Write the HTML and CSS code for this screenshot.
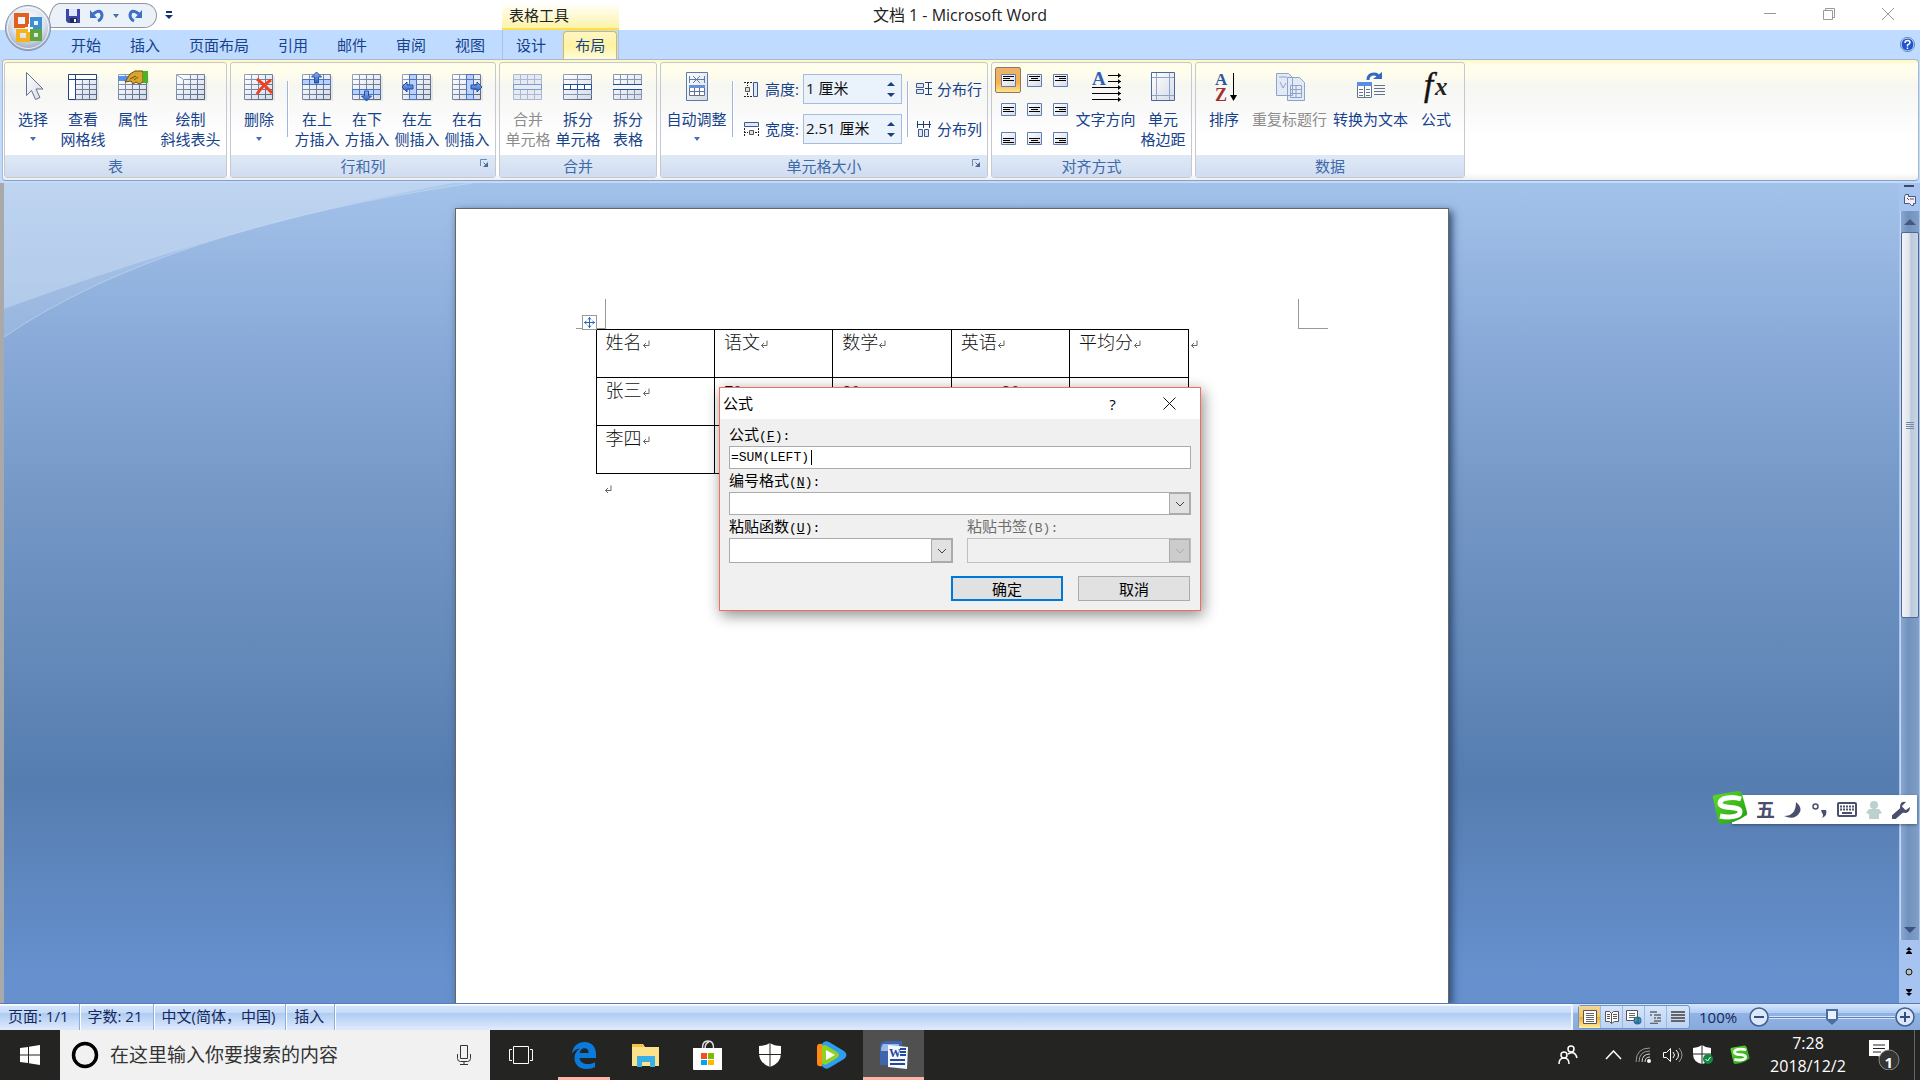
FILE: index.html
```html
<!DOCTYPE html>
<html lang="zh-CN">
<head>
    <meta charset="UTF-8">
    <meta name="viewport" content="width=device-width, initial-scale=1.0">
    <title>文档 1 - Microsoft Word</title>
    <link rel="stylesheet" href="styles.css">
</head>
<body>
    <!-- shared icon parts -->
    <svg class="defs" aria-hidden="true">
        <defs>
            <linearGradient id="cell" x1="0" y1="0" x2="1" y2="1">
                <stop offset="0" stop-color="#fff"/><stop offset="1" stop-color="#d5dae6"/>
            </linearGradient>
            <linearGradient id="edge" gradientUnits="userSpaceOnUse" x1="1" y1="3" x2="30" y2="29">
                <stop offset="0" stop-color="#93a3c0"/><stop offset="1" stop-color="#4f6282"/>
            </linearGradient>
            <linearGradient id="arrow" x1="0" y1="0" x2="0" y2="1">
                <stop offset="0" stop-color="#8fb4f2"/><stop offset="1" stop-color="#2a5cc0"/>
            </linearGradient>
            <radialGradient id="orb" cx="50%" cy="35%" r="65%">
                <stop offset="0" stop-color="#fff"/><stop offset="55%" stop-color="#dfe5ee"/><stop offset="100%" stop-color="#96a5bd"/>
            </radialGradient>
            <linearGradient id="green" x1="0" y1="0" x2="1" y2="1">
                <stop offset="0" stop-color="#5fdc28"/><stop offset="1" stop-color="#1c9d10"/>
            </linearGradient>
            <symbol id="grid" viewBox="0 0 32 32">
                <path d="M3 5h29v25H3z" fill="#0001"/>
                <path d="M1.500 3.500h28v25h-28z" fill="url(#cell)" stroke="url(#edge)"/>
                <path d="M1.500 8.500h28m-28 5h28m-28 5h28m-28 5h28M8.500 3.500v25m7-25v25m7-25v25" stroke="url(#edge)" fill="none"/>
            </symbol>
            <symbol id="ret" viewBox="0 0 8 9">
                <path d="M7 .5v5H1.500M4 3L1.500 5.500 4 8" fill="none" stroke="#666"/>
            </symbol>
            <symbol id="launch" viewBox="0 0 9 9">
                <path d="M.5 7V.5H7" fill="none" stroke="#6a87b3"/><path d="M3.500 3.500l3 3" stroke="#4a6b9f"/><path d="M8 3v5H3z" fill="#4a6b9f"/>
            </symbol>
            <symbol id="sogou" viewBox="0 0 36 34">
                <path d="M1 7Q0 5 3 4L26 0q3 0 4 3l5 18q1 3-2 4Q24 32 9 33q-2 0-3-3z" fill="url(#green)"/>
                <path d="M29 8C20 5 8 7 8 12c0 7 21 2 20 9 0 5-12 6-20 4" fill="none" stroke="#fff" stroke-width="5"/>
            </symbol>
            <symbol id="chev" viewBox="0 0 10 6"><path d="M1 1l4 4 4-4" fill="none" stroke="currentColor"/></symbol>
            <symbol id="drop" viewBox="0 0 6 4"><path d="M0 0h6L3 4z" fill="#4a6fb0"/></symbol>
        </defs>
    </svg>

    <header class="titlebar">
        <div class="titlebar-left">
            <div class="quick">
                <button aria-label="保存"><svg width="16" height="16" viewBox="0 0 16 16"><path d="M1 1h14v14H3l-2-2z" fill="#3c46a8"/><path d="M4 1h8v7H4z" fill="#dfe6ff"/><path d="M5 10h7v5H5z" fill="#222a55"/><path d="M9 11h2v3H9z" fill="#fff"/></svg></button>
                <button aria-label="撤消"><svg width="16" height="16" viewBox="0 0 16 16"><path d="M4 6Q12 0 13 7q0 4-4 6" fill="none" stroke="#3c70c4" stroke-width="3"/><path d="M1 2v8h7z" fill="#3c70c4"/></svg></button>
                <svg width="6" height="4"><use href="#drop"/></svg>
                <button aria-label="重复"><svg width="16" height="16" viewBox="0 0 16 16"><path d="M12 6Q4 0 3 7q0 4 4 6" fill="none" stroke="#3c70c4" stroke-width="3"/><path d="M15 2v8H8z" fill="#3c70c4"/></svg></button>
            </div>
            <button class="quick-more" aria-label="自定义快速访问工具栏"><svg width="8" height="9" viewBox="0 0 8 9"><path d="M1 0h6v2H1zM0 4h8L4 8z" fill="#15336e"/></svg></button>
            <div class="context-title">表格工具</div>
        </div>
        <h1>文档 1 - Microsoft Word</h1>
        <div class="window-buttons">
            <button aria-label="最小化"><svg width="12" height="12"><path d="M0 5.500h12" stroke="#999"/></svg></button>
            <button aria-label="还原"><svg width="12" height="12"><path d="M.5 2.500h9v9h-9zM2.500 2.500v-2h9v9h-2" fill="none" stroke="#999"/></svg></button>
            <button aria-label="关闭"><svg width="12" height="12"><path d="M0 0l12 12M12 0L0 12" stroke="#999"/></svg></button>
        </div>
        <button class="orb" aria-label="Office 按钮">
            <svg width="48" height="48" viewBox="0 0 48 48">
                <circle cx="24" cy="24" r="22.500" fill="url(#orb)" stroke="#8192ad"/>
                <circle cx="24" cy="24" r="20.500" fill="none" stroke="#fff" stroke-opacity=".8"/>
                <g fill="none" stroke-width="4">
                    <path d="M12 11h11v11H12z" stroke="#e2601f"/><path d="M28 15h8v8h-8z" stroke="#3b8fd6"/>
                    <path d="M14 27h10v9H14z" stroke="#f4b21c"/><path d="M28 27h8v8h-8z" stroke="#5fa53c"/>
                </g>
                <path d="M21 24h8M25 20v8" stroke="#fff" stroke-width="2"/>
            </svg>
        </button>
    </header>

    <nav class="tabs">
        <a href="#">开始</a><a href="#">插入</a><a href="#">页面布局</a><a href="#">引用</a><a href="#">邮件</a><a href="#">审阅</a><a href="#">视图</a>
        <div class="context-tabs"><a href="#">设计</a><a href="#" class="active">布局</a></div>
        <button class="help" aria-label="帮助"><svg width="15" height="15" viewBox="0 0 15 15"><circle cx="7.500" cy="7.500" r="6.500" fill="#1f55d0" stroke="#fff"/><circle cx="7.500" cy="7.500" r="7" fill="none" stroke="#4d7ab5"/><path d="M5 6q0-2.500 2.500-2.500T10 5.500Q10 7 7.500 8v1.500M7.500 10.500v1.500" stroke="#fff" stroke-width="1.500" fill="none"/></svg></button>
    </nav>

    <section class="ribbon">
        <div class="group">
            <div class="group-body">
                <button class="big"><svg width="32" height="32" viewBox="0 0 32 32"><path d="M9.500 1.500v23l5-5 4 9 4.500-2-4-8.500h7z" fill="url(#cell)" stroke="#65738c"/></svg>选择<svg class="caret" width="6" height="4"><use href="#drop"/></svg></button>
                <button class="big"><svg width="32" height="32" viewBox="0 0 32 32"><use href="#grid"/><path d="M1.500 3.500h28v5h-28zM1.500 8.500h7v20h-7z" fill="#fff" stroke="#24437c"/><path d="M8.500 3v25" stroke="#24437c"/></svg>查看<br>网格线</button>
                <button class="big"><svg width="32" height="32" viewBox="0 0 32 32"><use href="#grid"/><path d="M1 5h10v5H1z" fill="#5b90e8"/><path d="M8 11l5-8 5-3h8v11l-4 2-3-2-3 2-2-3z" fill="#d8a62e" stroke="#6c4d10"/><path d="M13 8l6-3M17 9l4-3" stroke="#6c4d10"/><path d="M26 0h5v12h-5z" fill="#46b32b"/></svg>属性</button>
                <button class="big wide"><svg width="32" height="32" viewBox="0 0 32 32"><use href="#grid"/><path d="M2 4h7v5H2z" fill="#fff"/><path d="M2 4l7 5" stroke="#8d99b5"/></svg>绘制<br>斜线表头</button>
            </div>
            <h2>表</h2>
        </div>
        <div class="group">
            <div class="group-body">
                <button class="big"><svg width="32" height="32" viewBox="0 0 32 32"><use href="#grid"/><path d="M14 8q8 6 15 14M28 9q-9 6-14 14" fill="none" stroke="#f0401e" stroke-width="3"/></svg>删除<svg class="caret" width="6" height="4"><use href="#drop"/></svg></button>
                <span class="sep"></span>
                <button class="big"><svg width="32" height="32" viewBox="0 0 32 32"><use href="#grid"/><path d="M1.500 8.500h28v5h-28z" fill="#b9d0fa" stroke="#4a72bf"/><path d="M8.500 8v6m14-6v6" stroke="#4a72bf"/><path d="M15.500 1l5 5h-3v6h-4V6h-3z" fill="url(#arrow)" stroke="#2450a4"/></svg>在上<br>方插入</button>
                <button class="big"><svg width="32" height="32" viewBox="0 0 32 32"><use href="#grid"/><path d="M1.500 18.500h28v5h-28z" fill="#b9d0fa" stroke="#4a72bf"/><path d="M8.500 18v6m14-6v6" stroke="#4a72bf"/><path d="M15.500 30l5-5h-3v-5h-4v5h-3z" fill="url(#arrow)" stroke="#2450a4"/></svg>在下<br>方插入</button>
                <button class="big"><svg width="32" height="32" viewBox="0 0 32 32"><use href="#grid"/><path d="M8.500 3.500h7v25h-7z" fill="#b9d0fa" stroke="#4a72bf"/><path d="M8 8.500h8m-8 15h8" stroke="#4a72bf"/><path d="M1 16l5-5v3h6v4H6v3z" fill="url(#arrow)" stroke="#2450a4"/></svg>在左<br>侧插入</button>
                <button class="big"><svg width="32" height="32" viewBox="0 0 32 32"><use href="#grid"/><path d="M15.500 3.500h7v25h-7z" fill="#b9d0fa" stroke="#4a72bf"/><path d="M15 8.500h8m-8 15h8" stroke="#4a72bf"/><path d="M31 16l-5-5v3h-6v4h6v3z" fill="url(#arrow)" stroke="#2450a4"/></svg>在右<br>侧插入</button>
            </div>
            <h2>行和列<button class="launcher" aria-label="行和列选项"><svg width="9" height="9"><use href="#launch"/></svg></button></h2>
        </div>
        <div class="group">
            <div class="group-body">
                <button class="big" disabled><svg width="32" height="32" viewBox="0 0 32 32"><g fill="#e6eaf3" stroke="#aab8d2"><path d="M1.500 3.500h28v10h-28zM1.500 13.500h28v5h-28zM1.500 18.500h28v10h-28z"/><path d="M1 8.500h29m-29 15h29M8.500 4v9m7-9v9m7-9v9m-14 6v9m7-9v9m7-9v9"/><path d="M1.500 13.500h28v5h-28z" stroke="#7f9bcd"/></g></svg>合并<br>单元格</button>
                <button class="big"><svg width="32" height="32" viewBox="0 0 32 32"><path d="M1.500 3.500h28v25h-28z" fill="url(#cell)" stroke="url(#edge)"/><path d="M1 8.500h29m-29 15h29M15.500 4v24" stroke="#8494b2"/><path d="M1.500 13.500h28v5h-28zM8.500 13v5m7-5v5m7-5v5" fill="#fff" stroke="#1f4da3"/></svg>拆分<br>单元格</button>
                <button class="big"><svg width="32" height="32" viewBox="0 0 32 32"><path d="M1.500 3.500h28v10h-28zM1.500 18.500h28v10h-28z" fill="url(#cell)" stroke="#8494b2"/><path d="M1 8.500h29m-29 15h29M8.500 4v9m7-9v9m7-9v9m-14 6v9m7-9v9m7-9v9" stroke="#8494b2"/><path d="M1 13.500h29m-29 5h29" stroke="#1f4da3"/></svg>拆分<br>表格</button>
            </div>
            <h2>合并</h2>
        </div>
        <div class="group">
            <div class="group-body">
                <button class="big wide"><svg width="32" height="32" viewBox="0 0 32 32"><path d="M5.500 1.500h21v28h-21z" fill="url(#cell)" stroke="#5d7ba8"/><path d="M8.500 5v7m15-7v7M9 8.500h14M12 5l7 7m0-7l-7 7" stroke="#5d7ba8"/><path d="M8.500 14.500h15v10h-15z" fill="#fff" stroke="#63728e"/><path d="M8 14h16v3H8z" fill="#6590dc"/><path d="M9 20.500h14M13.500 17v8m5-8v8" stroke="#63728e"/></svg>自动调整<svg class="caret" width="6" height="4"><use href="#drop"/></svg></button>
                <span class="sep"></span>
                <div class="size-fields">
                    <label for="row-height"><svg width="16" height="16" viewBox="0 0 16 16"><path d="M10.500 1.500h4v14h-4z" fill="#dfe8f8" stroke="#41598a"/><path d="M1 1.500h8M1 15.500h8M4.500 1v4m0 7v4" stroke="#222" stroke-dasharray="2 1"/><path d="M2.500 6.500h4v4h-4z" fill="#ddd" stroke="#555"/></svg>高度:</label>
                    <div class="spin"><input id="row-height" type="text" value="1 厘米"><button aria-label="调整高度"><svg width="8" height="15" viewBox="0 0 8 15"><path d="M4 0l4 4H0zM4 15l4-4H0z" fill="#1c3f7c"/></svg></button></div>
                    <label for="col-width"><svg width="16" height="16" viewBox="0 0 16 16"><path d="M1.500 1.500h14v4h-14z" fill="#dfe8f8" stroke="#41598a"/><path d="M1.500 7v8M15.500 7v8M1 11.500h4m7 0h4" stroke="#222" stroke-dasharray="2 1"/><path d="M6.500 9.500h4v4h-4z" fill="#ddd" stroke="#555"/></svg>宽度:</label>
                    <div class="spin"><input id="col-width" type="text" value="2.51 厘米"><button aria-label="调整宽度"><svg width="8" height="15" viewBox="0 0 8 15"><path d="M4 0l4 4H0zM4 15l4-4H0z" fill="#1c3f7c"/></svg></button></div>
                </div>
                <span class="sep"></span>
                <div class="distribute">
                    <button><svg width="16" height="16" viewBox="0 0 16 16"><path d="M.5 2.500h7v4h-7zM.5 8.500h7v4h-7z" fill="#dfe8f8" stroke="#41598a"/><path d="M9 1.500h7M9 7.500h7M9 13.500h7M12.500 1v13" stroke="#1c3f7c"/></svg>分布行</button>
                    <button><svg width="16" height="16" viewBox="0 0 16 16"><path d="M2.500 8.500h4v7h-4zM8.500 8.500h4v7h-4z" fill="#dfe8f8" stroke="#41598a"/><path d="M1.500 0v7M7.500 0v7M13.500 0v7M1 3.500h14" stroke="#1c3f7c"/></svg>分布列</button>
                </div>
            </div>
            <h2>单元格大小<button class="launcher" aria-label="单元格大小选项"><svg width="9" height="9"><use href="#launch"/></svg></button></h2>
        </div>
        <div class="group">
            <div class="group-body">
                <div class="align-grid" id="align-grid"></div>
                <button class="big wide"><svg width="32" height="32" viewBox="0 0 32 32"><text x="2" y="14" font-family="Liberation Serif" font-weight="bold" font-size="19" fill="#2f62b8">A</text><path d="M18 4.500h13m-13 6h13M2 16.500h29m-29 6h29m-29 6h29" stroke="#000"/><path d="M28 2l3 2.500-3 2.500zm0 6l3 2.500-3 2.500zm0 6l3 2.500-3 2.500zm0 6l3 2.500-3 2.500zm0 6l3 2.500-3 2.500z"/></svg>文字方向</button>
                <button class="big"><svg width="32" height="32" viewBox="0 0 32 32"><path d="M4.500 1.500h23v28h-23z" fill="url(#cell)" stroke="#4b689c"/><path d="M9.500 2v27m13-27v27M5 6.500h22M5 24.500h22" stroke="#8fa4c8"/></svg>单元<br>格边距</button>
            </div>
            <h2>对齐方式</h2>
        </div>
        <div class="group">
            <div class="group-body">
                <button class="big"><svg width="32" height="32" viewBox="0 0 32 32"><text x="7" y="14" font-family="Liberation Serif" font-weight="bold" font-size="17" fill="#31569f">A</text><text x="7" y="30" font-family="Liberation Serif" font-weight="bold" font-size="18" fill="#a33030">Z</text><path d="M25.500 2v24" stroke="#000"/><path d="M22 24h7l-3.500 6z"/></svg>排序</button>
                <button class="big extra" disabled><svg width="32" height="32" viewBox="0 0 32 32"><path d="M2.500 2.500h12l4 4v18h-16zM13.500 6.500h12l5 5v18h-17z" fill="#e3eaf5" stroke="#8ca4c9"/><path d="M5 6h8M6 11l3 6 3-5M16.500 14.500h11v12h-11zM16 18.500h12m-12 4h12m-6-8v12" fill="none" stroke="#8ca4c9"/></svg>重复标题行</button>
                <button class="big extra"><svg width="32" height="32" viewBox="0 0 32 32"><path d="M2.500 11.500h14v15h-14z" fill="#fff" stroke="#63728e"/><path d="M2 11h15v4H2z" fill="#5b8ce6"/><path d="M4 18.500h4m-4 3h4m-4 3h4m3-6h4m-4 3h4m-4 3h4M9.500 15v11M19 14.500h11m-11 3h11m-11 3h11m-11 3h11" stroke="#63728e"/><path d="M13 9q0-6 6-6 4 0 5 4" fill="none" stroke="#3769c2" stroke-width="3"/><path d="M18 8h9V1z" fill="#3769c2"/></svg>转换为文本</button>
                <button class="big"><svg width="32" height="32" viewBox="0 0 32 32"><text x="4" y="25" font-family="Liberation Serif" font-style="italic" font-size="33" fill="#111" stroke="#111" stroke-width=".5">f</text><text x="15" y="24" font-family="Liberation Serif" font-style="italic" font-weight="bold" font-size="25" fill="#222">x</text></svg>公式</button>
            </div>
            <h2>数据</h2>
        </div>
    </section>

    <main class="workspace">
        <svg class="swoosh" width="480" height="160" viewBox="0 0 480 160" aria-hidden="true">
            <path d="M0 0H469Q160 45 0 154z" fill="#fff" fill-opacity=".12"/>
            <path d="M0 0H449Q240 38 0 126z" fill="#dbe8fa" fill-opacity=".36"/>
            <path d="M469 0Q160 45 0 154" fill="none" stroke="#c4daf4" stroke-opacity=".6"/>
        </svg>
        <div class="desk">
            <article class="page">
                <span class="corner corner-left"></span>
                <span class="corner corner-right"></span>
                <span class="table-handle"><svg width="11" height="11" viewBox="0 0 11 11"><path d="M5.500 0v11M0 5.500h11M4 2.500l1.500-2 1.500 2m-3 6l1.500 2 1.500-2M2.500 4l-2 1.500 2 1.500m6-3l2 1.500-2 1.500" fill="none" stroke="#2f66c0"/></svg></span>
                <div class="table-row">
                    <table>
                        <tr><td>姓名<svg><use href="#ret"/></svg></td><td>语文<svg><use href="#ret"/></svg></td><td>数学<svg><use href="#ret"/></svg></td><td>英语<svg><use href="#ret"/></svg></td><td>平均分<svg><use href="#ret"/></svg></td></tr>
                        <tr><td>张三<svg><use href="#ret"/></svg></td><td class="num">70</td><td class="num">80</td><td class="num indent">90</td><td></td></tr>
                        <tr><td>李四<svg><use href="#ret"/></svg></td><td></td><td></td><td></td><td></td></tr>
                    </table>
                    <svg><use href="#ret"/></svg>
                </div>
                <p><svg><use href="#ret"/></svg></p>
            </article>
        </div>
        <div class="scroll">
            <span class="split"></span>
            <button aria-label="标尺"><svg width="13" height="13" viewBox="0 0 13 13"><path d="M1.500 3.500v7h5l2 2h2v-2h2v-7h-7v-2h-3z" fill="#f4eef2" stroke="#455a80"/><path d="M4 5l2 2m2-2v2m2-2v2" stroke="#455a80"/></svg></button>
            <div class="track">
                <button aria-label="向上"><svg width="12" height="6"><path d="M6 0l6 6H0z" fill="#47587f"/></svg></button>
                <div class="thumb"><i></i><i></i><i></i><i></i></div>
                <div class="rest"></div>
                <button aria-label="向下"><svg width="12" height="6"><path d="M0 0h12L6 6z" fill="#3c5282"/></svg></button>
            </div>
            <button class="browse" aria-label="前一页"><svg width="6" height="7"><path d="M3 0l3 3H0zM3 3l3 3H0zM0 6h6v1H0z"/></svg></button>
            <button class="browse" aria-label="选择浏览对象"><svg width="8" height="8"><circle cx="4" cy="4" r="3" fill="#bbb" stroke="#111"/></svg></button>
            <button class="browse" aria-label="下一页"><svg width="6" height="7"><path d="M0 0h6v1H0zM0 1h6L3 4zM0 4h6L3 7z"/></svg></button>
        </div>
    </main>

    <footer class="status">
        <span>页面: 1/1</span><span>字数: 21</span><span>中文(简体，中国)</span><span>插入</span>
        <div class="status-right">
            <div class="views">
                <button class="on" aria-label="页面视图"><svg width="16" height="16" viewBox="0 0 16 16"><path d="M1.500 1.500h13v13h-13z" fill="#fff" stroke="#555"/><path d="M4 4.500h8m-8 2h8m-8 2h8m-8 2h8m-8 2h8" stroke="#666"/></svg></button>
                <button aria-label="阅读版式"><svg width="16" height="16" viewBox="0 0 16 16"><path d="M1.500 2.500h4l2 2 2-2h5v10h-4l-3 2-2-2h-4z" fill="#fff" stroke="#555"/><path d="M7.500 4v10M3 5.500h3m-3 2h3m-3 2h3m3-4h4m-4 2h4m-4 2h4" stroke="#555"/></svg></button>
                <button aria-label="Web 版式"><svg width="16" height="16" viewBox="0 0 16 16"><path d="M.5 1.500h11v10H.5z" fill="#fff" stroke="#555"/><path d="M3 4.500h6m-6 2h6m-6 2h6" stroke="#666"/><circle cx="11.500" cy="11.500" r="4" fill="#2d68b8"/><path d="M9 9l3 1-1 2-2 1zM13 9l2 2-2 3z" fill="#4aa64a"/></svg></button>
                <button aria-label="大纲视图"><svg width="14" height="14" viewBox="0 0 14 14"><path d="M1 2h7M5 5h7M8 8h4M5 11h7M1 13.500h8M1 5h2m2 3h2" stroke="#666" stroke-width="1.500"/></svg></button>
                <button aria-label="普通视图"><svg width="14" height="14" viewBox="0 0 14 14"><path d="M0 2h14M0 5h14M0 8h14M0 11h14" stroke="#666" stroke-width="2"/></svg></button>
            </div>
            <span class="percent">100%</span>
            <button class="zoom-btn" aria-label="缩小"><svg width="20" height="20" viewBox="0 0 20 20"><circle cx="10" cy="10" r="9" fill="#dce8fa" stroke="#3f5f94" stroke-width="1.500"/><path d="M5 10h10" stroke="#35507f" stroke-width="2"/></svg></button>
            <input type="range" min="0" max="100" value="50" aria-label="显示比例">
            <button class="zoom-btn" aria-label="放大"><svg width="20" height="20" viewBox="0 0 20 20"><circle cx="10" cy="10" r="9" fill="#dce8fa" stroke="#3f5f94" stroke-width="1.500"/><path d="M5 10h10M10 5v10" stroke="#35507f" stroke-width="2"/></svg></button>
        </div>
    </footer>

    <div class="taskbar">
        <button class="start" aria-label="开始菜单"><svg width="20" height="20" viewBox="0 0 20 20"><path d="M0 3l8-1v7.500H0zM9 1.800L20 0v9.500H9zM0 10.500h8V18l-8-1zM9 10.500h11V20L9 18.200z" fill="#fff"/></svg></button>
        <div class="search">
            <svg width="28" height="28" viewBox="0 0 28 28"><circle cx="14" cy="14" r="11.500" fill="none" stroke="#000" stroke-width="3.500"/></svg>
            <input type="text" placeholder="在这里输入你要搜索的内容" aria-label="搜索">
            <button aria-label="语音"><svg width="16" height="20" viewBox="0 0 16 20"><path d="M4.500.5h7v13h-7zM1.500 9v4.500q0 3 3 3h7q3 0 3-3V9M8 17v2.500M4 19.500h8" fill="none" stroke="#333"/></svg></button>
        </div>
        <button class="app" aria-label="任务视图"><svg width="24" height="18" viewBox="0 0 24 18"><path d="M4.500.5h15v17h-15zM3 3.500H.5v11H3M21 3.500h2.500v11H21" fill="none" stroke="#fff"/></svg></button>
        <button class="app running" aria-label="Edge"><svg width="26" height="28" viewBox="0 0 26 28"><path d="M1 12.500C2 5 7 1 13.500 1 21 1 25 6.500 25 13v4H8.500c.5 4 4 6 8.500 6 3 0 5-.7 7-1.800V26c-2 1.200-5 2-8.500 2C8 28 3.500 23.500 3.500 17c0-4 2-7.500 5.500-9.500C5.500 8 3 9.500 1 12.500zM8.700 12h9c0-3-1.500-4.700-4.200-4.700S9.300 9 8.700 12z" fill="#0a7bdc" fill-rule="evenodd"/></svg></button>
        <button class="app" aria-label="文件资源管理器"><svg width="28" height="24" viewBox="0 0 28 24"><path d="M0 1h11l2 3h14v19H0z" fill="#fde28c"/><path d="M0 1h10l2 3H0z" fill="#f5c343"/><path d="M5 24V13h18v11h-5v-5h-8v5z" fill="#39b1e6"/></svg></button>
        <button class="app" aria-label="应用商店"><svg width="30" height="30" viewBox="0 0 30 30"><path d="M9.500 9Q9 1 15 1t5.500 8M12 9q0-6 4-7" fill="none" stroke="#ddd" stroke-width="1.500"/><path d="M0 8h29v22H1q-1 0-1-1z" fill="#fff"/><path d="M8 13h6v6H8z" fill="#f25022"/><path d="M15 13h6v6h-6z" fill="#7fba00"/><path d="M8 20h6v5H8z" fill="#00a4ef"/><path d="M15 20h6v5h-6z" fill="#ffb900"/></svg></button>
        <button class="app" aria-label="安全中心"><svg width="22" height="24" viewBox="0 0 22 24"><path d="M11 0q4 3 11 3v7q0 10-11 14Q0 20 0 10V3q7 0 11-3z" fill="#fff"/><path d="M11 0v24M0 11.500h22" stroke="#242422"/></svg></button>
        <button class="app" aria-label="视频"><svg width="30" height="28" viewBox="0 0 30 28"><path d="M0 6q0-4 5-3v22q-5 1-5-3z" fill="#ff8a14"/><path d="M5 3q2-4 7-2l15 9q5 4 0 8l-15 9q-4 2-7-2z" fill="#2f9df0"/><path d="M5 5q2-2 5 0l10 6q4 3 0 6l-10 6q-3 2-5-1z" fill="#8ed321"/><path d="M9 9l9 5-9 5z" fill="#fff"/></svg></button>
        <button class="app running current" aria-label="Word"><svg width="30" height="28" viewBox="0 0 30 28"><path d="M6 0h17v24H1V6q0-5 5-6z" fill="#3d64ad"/><path d="M4 3h16v7H2q0-5 2-7z" fill="#9bb8e6"/><path d="M9 4l20 2-1 22-19-2z" fill="#f4f7fc"/><text x="10" y="16" font-family="Liberation Serif" font-weight="bold" font-size="12" fill="#24489c">W</text><path d="M21 8h6m-6 3h6m-6 3h6M11 19h15m-15 4h15" stroke="#24489c" stroke-width="2"/></svg></button>
        <div class="tray">
            <button class="people" aria-label="人脉"><svg width="20" height="20" viewBox="0 0 20 20"><g fill="none" stroke="#fff" stroke-width="1.500"><circle cx="13" cy="4" r="3"/><circle cx="6" cy="10" r="3"/><path d="M1 19q0-6 5-6t5 6M10 9q7-4 9 4"/></g></svg></button>
            <button aria-label="显示隐藏的图标"><svg width="17" height="10" viewBox="0 0 17 10"><path d="M1 9l7.500-8L16 9" fill="none" stroke="#fff" stroke-width="1.500"/></svg></button>
            <button aria-label="网络"><svg width="16" height="16" viewBox="0 0 16 16"><g fill="none" stroke="#ddd"><path d="M1 15Q1 1 15 1M4 15Q4 4 15 4" stroke="#999"/><path d="M7 15q0-8 8-8M10 15q0-5 5-5"/></g><circle cx="14" cy="14" r="2" fill="#fff"/></svg></button>
            <button aria-label="音量"><svg width="20" height="18" viewBox="0 0 20 18"><g fill="none" stroke="#fff"><path d="M.5 6.500h3l4-4v13l-4-4h-3zM10 6q3 3 0 6M13 4q5 5 0 10"/><path d="M16 2q6 7 0 14" stroke="#999"/></g></svg></button>
            <button aria-label="Defender"><svg width="20" height="20" viewBox="0 0 20 20"><path d="M9 0q4 3 9 3v6q0 8-9 10Q0 17 0 9V3q5 0 9-3z" fill="#fff"/><path d="M9 0v19M0 9h18" stroke="#242422"/><circle cx="15" cy="14" r="5" fill="#13893f"/><path d="M12.500 14l2 2 3-4" fill="none" stroke="#fff"/></svg></button>
            <button class="ime-tray" aria-label="输入法"><svg width="20" height="20"><use href="#sogou"/></svg></button>
            <time>7:28<br>2018/12/2</time>
            <button class="notice" aria-label="通知"><svg width="31" height="30" viewBox="0 0 31 30"><path d="M0 0h20v16h-6v4l-5-4H0z" fill="#fff"/><path d="M4 5h12M4 8.500h12M4 12h8" stroke="#242422"/><circle cx="20" cy="20" r="10" fill="#353534" stroke="#888"/></svg><b>1</b></button>
        </div>
    </div>

    <div class="ime">
        <svg class="ime-logo" width="36" height="34"><use href="#sogou"/></svg>
        <button>五</button>
        <button aria-label="半角"><svg width="18" height="18" viewBox="0 0 18 18"><path d="M12 1q6 5 4 10-5 9-16 4 12 0 12-14z" fill="#4b4f6e"/></svg></button>
        <button aria-label="中文标点"><svg width="16" height="18" viewBox="0 0 16 18"><circle cx="3.500" cy="5.500" r="2.500" fill="none" stroke="#4b4f6e" stroke-width="1.500"/><path d="M9 9h5q2 5-4 8 2-3 0-5z" fill="#4b4f6e"/></svg></button>
        <button aria-label="软键盘"><svg width="20" height="15" viewBox="0 0 20 15"><rect x="1" y="1" width="18" height="13" rx="1" fill="#fff" stroke="#4b4f6e" stroke-width="2"/><path d="M3 4.500h14M3 7.500h14" stroke="#4b4f6e" stroke-width="2" stroke-dasharray="2 1"/><path d="M5 11h10" stroke="#4b4f6e" stroke-width="2"/></svg></button>
        <button aria-label="账户"><svg width="16" height="18" viewBox="0 0 16 18"><circle cx="8" cy="4" r="4" fill="#bcd0cd"/><path d="M3 8h10l3 4-3 1v5H3v-5l-3-1z" fill="#bcd0cd"/></svg></button>
        <button aria-label="工具"><svg width="18" height="18" viewBox="0 0 18 18"><path d="M2 16l8-7" stroke="#4b4f6e" stroke-width="5" stroke-linecap="round"/><path d="M14 1q-6-1-6 5t6 6q4-1 4-6l-4 3-3-1-1-3z" fill="#4b4f6e"/></svg></button>
    </div>

    <form class="dialog" role="dialog" aria-label="公式">
        <div class="dialog-title">
            <h2>公式</h2>
            <button type="button">?</button>
            <button type="button" aria-label="关闭"><svg width="13" height="13"><path d="M.5.5l12 12M12.500.5l-12 12" stroke="#111"/></svg></button>
        </div>
        <div class="dialog-body">
            <label for="formula">公式<span class="key">(<u>F</u>):</span></label>
            <div class="formula"><input id="formula" type="text" value="=SUM(LEFT)"><i class="cursor"></i></div>
            <label for="format">编号格式<span class="key">(<u>N</u>):</span></label>
            <div class="combo"><select id="format"><option></option></select><span><svg width="10" height="6"><use href="#chev"/></svg></span></div>
            <div class="pair">
                <div>
                    <label for="func">粘贴函数<span class="key">(<u>U</u>):</span></label>
                    <div class="combo tall"><select id="func"><option></option></select><span><svg width="10" height="6"><use href="#chev"/></svg></span></div>
                </div>
                <div class="off">
                    <label for="mark">粘贴书签<span class="key">(B):</span></label>
                    <div class="combo tall"><select id="mark" disabled><option></option></select><span><svg width="10" height="6"><use href="#chev"/></svg></span></div>
                </div>
            </div>
            <div class="actions">
                <button type="button" class="ok">确定</button>
                <button type="button">取消</button>
            </div>
        </div>
    </form>

    <script>
        // nine cell alignment buttons, row by row
        const rows = ['靠上', '中部', '靠下'];
        const cols = ['左对齐', '居中', '右对齐'];
        const box = document.getElementById('align-grid');

        rows.forEach((row, r) => {
            cols.forEach((col, c) => {
                const top = 2.5 + r * 2;
                const short = 2 + c * 2;
                const btn = document.createElement('button');
                btn.setAttribute('aria-label', row + col);
                if (r === 0 && c === 0) {
                    btn.className = 'on';
                }
                btn.innerHTML = `<svg width="15" height="13" viewBox="0 0 15 13"><path d="M.5.5h14v12H.5z" fill="url(#cell)" stroke="#5f7fb4"/><path d="M2 ${top}h11M${short} ${top + 2}h7M2 ${top + 4}h11" stroke="#000"/></svg>`;
                box.appendChild(btn);
            });
        });
    </script>
</body>
</html>
```
FILE: styles.css
```css
* {
    box-sizing: border-box;
}
body {
    margin: 0;
    height: 100vh;
    display: flex;
    flex-direction: column;
    overflow: hidden;
    position: relative;
    background: #bfdbff;
    color: #15428b;
    font-family: "Open Sans", "Noto Sans CJK SC", sans-serif;
    font-size: 15px;
    line-height: 20px;
}
button {
    padding: 0;
    border: 0;
    background: none;
    color: inherit;
    font: inherit;
    display: flex;
    align-items: center;
    justify-content: center;
}
h1, h2, p {
    margin: 0;
    font-size: 15px;
    font-weight: normal;
}
a {
    color: inherit;
    text-decoration: none;
}
svg {
    display: block;
    flex: none;
}
.defs {
    position: absolute;
    width: 0;
    height: 0;
}

/* title bar */
.titlebar {
    display: grid;
    grid-template-columns: 1fr auto 1fr;
    height: 30px;
    background: #fff;
    position: relative;
    flex: none;
}
.titlebar-left {
    display: flex;
    padding-left: 48px;
}
.quick {
    display: flex;
    align-items: center;
    gap: 8px;
    width: 109px;
    height: 25px;
    margin-top: 3px;
    padding-left: 16px;
    background: #eaf1f8;
    border: 1px solid #8e959e;
    border-radius: 0 13px 13px 0;
    border-top-left-radius: 12px 24px;
}
.quick-more {
    width: 24px;
}
.context-title {
    flex: none;
    width: 117px;
    margin-left: 321px;
    padding: 5px 7px 0;
    color: #222;
    background: linear-gradient(#fff 10%, #fdf3a8);
    border-bottom: 2px solid #fbe04a;
}
.titlebar h1 {
    font-size: 16px;
    color: #222;
    line-height: 30px;
}
.window-buttons {
    display: flex;
    justify-content: flex-end;
    padding-right: 3px;
}
.window-buttons button {
    width: 59px;
    height: 28px;
}
.orb {
    position: absolute;
    left: 4px;
    top: 4px;
    z-index: 2;
}

/* tabs */
.tabs {
    display: flex;
    align-items: stretch;
    gap: 29px;
    height: 29px;
    padding-left: 71px;
    line-height: 30px;
    flex: none;
}
.context-tabs {
    display: flex;
    gap: 17px;
    margin-left: -12px;
    padding: 0 1px 0 13px;
    border: solid #a9c3e6;
    border-width: 0 1px;
}
.context-tabs .active {
    margin-top: 1px;
    padding: 0 11px;
    border: 1px solid #d9b94a;
    border-bottom: 0;
    border-radius: 4px 4px 0 0;
    line-height: 27px;
    background: linear-gradient(#fff6c4, #fff3a0 50%, #fffbd9);
}
.help {
    margin: 0 5px 0 auto;
}

/* ribbon */
.ribbon {
    display: flex;
    gap: 3px;
    height: 122px;
    margin: 0 1px 2px 2px;
    padding: 2px 1px;
    border: 1px solid #a9b9d0;
    border-bottom-color: #8ba0bf;
    border-radius: 4px;
    background: linear-gradient(#fff6c0, #fffeed 4%, #fffdec 12%, #f6f6f2 22%, #fafafa 45%, #fff 65%, #fff 94%, #efefef);
    flex: none;
}
.group {
    display: flex;
    flex-direction: column;
    border: 1px solid #c5c9cf;
    border-radius: 3px;
}
.group-body {
    display: flex;
    align-items: flex-start;
    height: 92px;
    padding: 0 3px;
}
.group h2 {
    position: relative;
    flex: 1;
    text-align: center;
    line-height: 22px;
    color: #3e6aaa;
    background: linear-gradient(#dfe9f6, #d0ddf1);
}
.launcher {
    position: absolute;
    right: 6px;
    top: 4px;
}
.big {
    width: 50px;
    padding-top: 8px;
    display: block;
    text-align: center;
    white-space: nowrap;
}
.big svg {
    margin: 0 auto 6px;
    overflow: visible;
}
.big .caret {
    margin: 8px auto 0;
}
.big.wide {
    width: 65px;
}
.big.extra {
    width: 81px;
}
.big:disabled {
    color: #8d8d8d;
}
.sep {
    width: 2px;
    height: 56px;
    margin: 18px 3px 0;
    border-left: 1px solid #9db8dc;
    background: #fff;
}
.size-fields {
    display: grid;
    grid-template-columns: 60px 99px;
    grid-template-rows: 30px 30px;
    row-gap: 10px;
    padding: 11px 2px 0 6px;
}
.size-fields label {
    display: flex;
    align-items: center;
    gap: 6px;
    white-space: nowrap;
}
.spin {
    display: flex;
    border: 1px solid #a4bce0;
    background: #eaf2fc;
}
.spin input {
    width: 79px;
    padding: 0 2px 3px;
    border: 0;
    background: none;
    font: inherit;
    color: #111;
}
.spin button {
    width: 16px;
}
.distribute {
    display: flex;
    flex-direction: column;
    gap: 10px;
    padding: 11px 2px 0 4px;
}
.distribute button {
    height: 30px;
    gap: 5px;
}
.align-grid {
    display: grid;
    grid-template-columns: repeat(3, 26px);
    grid-template-rows: repeat(3, 26px);
    row-gap: 3px;
    padding-top: 4px;
}
.align-grid .on {
    border: 1px solid #8d7a5a;
    border-radius: 2px;
    background: linear-gradient(#e9b273, #fbb14c 60%, #fde38c);
}

/* document area */
.workspace {
    position: relative;
    flex: 1;
    min-height: 0;
    display: flex;
    border-left: 4px solid #a9a9a9;
    background: linear-gradient(#a3c2ea, #8aabd9 19%, #7396c5 40%, #658bbb 56%, #567db0 73%, #6691ce 97%);
}
.swoosh {
    position: absolute;
    left: 0;
    top: 0;
}
.desk {
    flex: 1;
    display: flex;
    justify-content: center;
    overflow: hidden;
    padding-top: 25px;
    position: relative;
}
.page {
    position: relative;
    width: 994px;
    padding: 120px 140px 0;
    background: #fff;
    border: 1px solid #666;
    border-bottom: 0;
    box-shadow: 3px 3px 8px #2a4570;
    color: #111;
}
.corner {
    position: absolute;
    top: 90px;
    width: 30px;
    height: 30px;
    border-bottom: 1px solid #999;
}
.corner-left {
    left: 120px;
    border-right: 1px solid #999;
}
.corner-right {
    right: 120px;
    border-left: 1px solid #999;
}
.table-handle {
    position: absolute;
    left: 126px;
    top: 106px;
    padding: 1px;
    border: 1px solid #999;
    background: #fff;
}
.table-row {
    display: flex;
    gap: 1px;
}
.page svg {
    width: 8px;
    height: 9px;
}
.table-row > svg {
    margin-top: 11px;
}
.page .table-handle svg {
    width: 11px;
    height: 11px;
}
table {
    width: 593px;
    table-layout: fixed;
    border-collapse: collapse;
    font-family: "Liberation Serif", "Noto Sans CJK SC", serif;
    font-size: 18px;
    font-weight: 300;
}
td {
    height: 48px;
    padding: 1px 9px;
    border: 1px solid #000;
    vertical-align: top;
    line-height: 24px;
}
td svg {
    display: inline-block;
}
td.num {
    padding-top: 3px;
}
td.indent {
    padding-left: 50px;
}
.page p {
    padding: 11px 8px;
}

/* vertical scroll bar */
.scroll {
    position: relative;
    width: 21px;
    padding-right: 1px;
    display: flex;
    flex-direction: column;
    align-items: center;
    background: #a6c4ef;
}
.split {
    width: 10px;
    height: 2px;
    margin: 2px 0 6px;
    background: #3f4a6b;
}
.track {
    flex: 1;
    width: 19px;
    margin-top: 5px;
    display: flex;
    flex-direction: column;
    border-left: 1px solid #c2d8f5;
    background: linear-gradient(90deg, #88a8d2, #7192be 40%, #829fc5);
}
.track button {
    height: 21px;
}
.thumb {
    flex: 386;
    display: flex;
    flex-direction: column;
    align-items: center;
    justify-content: center;
    gap: 1px;
    border: 1px solid #4f6696;
    border-radius: 2px;
    background: linear-gradient(90deg, #f2f5f7, #dfe5ea 45%, #b9c9dd 55%, #c9d5e4);
}
.thumb i {
    width: 8px;
    height: 1px;
    background: #7b88a3;
}
.rest {
    flex: 302;
}
.browse {
    height: 21px;
}

/* status bar */
.status {
    display: flex;
    height: 27px;
    border-top: 1px solid #567db0;
    line-height: 24px;
    color: #15285c;
    background: linear-gradient(#fff 4%, #d3e4fb 8%, #c5dbf8 34%, #aecbf2 36%, #dbe9fb 94%);
    flex: none;
}
.status > span {
    padding: 0 10px 0 8px;
    border-right: 1px solid #8eacd8;
    box-shadow: 1px 0 #fff;
}
.status-right {
    margin-left: auto;
    padding: 0 5px;
    display: flex;
    align-items: center;
    border-left: 2px solid #eef5ff;
    background: linear-gradient(#d6e6fc, #b1cdf5 33%, #91b3e4 36%, #87a9dc);
}
.views {
    display: flex;
    height: 24px;
    margin-right: 9px;
    border: 1px solid #6f93c8;
    border-radius: 3px;
    background: linear-gradient(#d6e5fa, #bcd3f3);
}
.views button {
    width: 22px;
    border-right: 1px solid #9cb9e3;
}
.views button:last-child {
    border-right: 0;
}
.views .on {
    background: linear-gradient(#f3d49d, #f8c257 50%, #f3a92b 52%, #fdf0a4);
}
.percent {
    width: 50px;
}
.status input {
    appearance: none;
    width: 126px;
    height: 20px;
    margin: 0;
    background: linear-gradient(#5e80b8, #5e80b8) center / 100% 1px no-repeat, linear-gradient(#d5e4fa, #d5e4fa) center / 100% 3px no-repeat;
}
.status input::-webkit-slider-thumb {
    appearance: none;
    width: 12px;
    height: 16px;
    background: linear-gradient(#e9f1fc, #e9f1fc) center 2px / 8px 8px no-repeat, #4d6d9f;
    clip-path: polygon(0 0, 100% 0, 100% 65%, 50% 100%, 0 65%);
}

/* taskbar */
.taskbar {
    display: flex;
    height: 50px;
    background: #242422;
    color: #fff;
    flex: none;
}
.start {
    width: 60px;
}
.search {
    width: 430px;
    display: flex;
    align-items: center;
    gap: 11px;
    padding: 0 16px 0 11px;
    background: #f1f1f1;
}
.search input {
    flex: 1;
    min-width: 0;
    padding: 0;
    border: 0;
    background: none;
    font: inherit;
    font-size: 19px;
}
.search input::placeholder {
    color: #333;
}
.search button {
    width: 20px;
}
.app {
    width: 62px;
    border-bottom: 3px solid transparent;
    border-top: 3px solid transparent;
}
.running {
    border-bottom-color: #ffb3a5;
    width: 52px;
    margin: 0 5px 0 6px;
}
.current {
    width: 61px;
    margin: 0;
    background: #505050;
    border-top-color: #505050;
}
.tray {
    display: flex;
    align-items: center;
    margin-left: auto;
    padding-right: 5px;
}
.tray button {
    width: 30px;
    height: 50px;
}
.tray .people {
    width: 60px;
}
.tray .ime-tray {
    width: 44px;
}
.tray time {
    width: 92px;
    text-align: center;
    font-size: 16px;
    line-height: 23px;
}
.tray .notice {
    position: relative;
    width: 61px;
    border-right: 1px solid #666;
}
.notice b {
    position: absolute;
    right: 21px;
    bottom: 8px;
}

/* floating input method bar */
.ime {
    position: absolute;
    right: 3px;
    bottom: 256px;
    display: flex;
    height: 29px;
    padding: 0 3px 0 20px;
    background: #fff;
    box-shadow: 0 1px 3px #0006;
}
.ime button {
    width: 27px;
    font-size: 19px;
    font-weight: bold;
    color: #4b4f6e;
}
.ime-logo {
    position: absolute;
    left: -20px;
    bottom: -1px;
}

/* formula dialog */
.dialog {
    position: absolute;
    top: 387px;
    left: 50%;
    width: 482px;
    transform: translateX(-50%);
    border: 1px solid #ee6f5e;
    background: #f0f0f0;
    box-shadow: 2px 4px 14px #0007;
    color: #000;
}
.dialog-title {
    display: flex;
    height: 31px;
    padding: 0 2px 0 3px;
    background: #fff;
}
.dialog-title h2 {
    flex: 1;
    line-height: 30px;
}
.dialog-title button {
    width: 57px;
}
.dialog-body {
    padding: 5px 9px 9px;
}
.dialog label {
    display: block;
    height: 22px;
    line-height: 20px;
}
.key, .formula input {
    font-family: "Liberation Mono", "Noto Sans CJK SC", monospace;
    font-size: 13px;
}
.formula {
    position: relative;
}
.formula input {
    display: block;
    width: 100%;
    height: 23px;
    margin-bottom: 1px;
    padding: 0 1px;
    border: 1px solid #ababab;
    outline: 0;
    caret-color: transparent;
}
.cursor {
    position: absolute;
    left: 82px;
    top: 4px;
    width: 1px;
    height: 15px;
    background: #000;
}
.combo {
    position: relative;
    height: 24px;
}
.combo select {
    appearance: none;
    display: block;
    width: 100%;
    height: 23px;
    border: 1px solid #ababab;
    border-radius: 0;
    background: #fff;
}
.combo span {
    position: absolute;
    right: 1px;
    top: 1px;
    width: 21px;
    height: 21px;
    display: flex;
    align-items: center;
    justify-content: center;
    border: 1px solid #ababab;
    background: #e1e1e1;
    color: #444;
    pointer-events: none;
}
.combo.tall select {
    height: 25px;
}
.combo.tall span {
    height: 23px;
}
.pair {
    display: grid;
    grid-template-columns: 1fr 1fr;
    gap: 14px;
}
.off {
    color: #6d6d6d;
}
.combo select:disabled {
    background: #f0f0f0;
}
.off .combo span {
    background: #ccc;
    color: #aaa;
}
.actions {
    display: flex;
    justify-content: flex-end;
    gap: 15px;
    padding: 14px 1px 0 0;
}
.actions button {
    width: 112px;
    height: 25px;
    border: 1px solid #ababab;
    background: #e1e1e1;
}
.actions .ok {
    border: 2px solid #0078d7;
}
```
